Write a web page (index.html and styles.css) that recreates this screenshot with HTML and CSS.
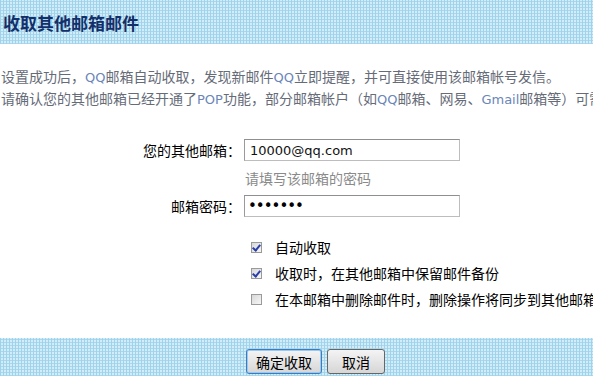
FILE: index.html
```
<!DOCTYPE html>
<html>

<head>
    <meta charset="UTF-8">
    <title>收取其他邮箱邮件</title>
    <link rel="stylesheet" href="styles.css">
</head>

<body>
    <div class="head">
        <h2 class="title">收取其他邮箱邮件</h2>
    </div>

    <div class="main">
        <p class="desc">设置成功后，<span class="en">QQ</span>邮箱自动收取，发现新邮件<span class="en">QQ</span>立即提醒，并可直接使用该邮箱帐号发信。</p>
        <p class="desc">请确认您的其他邮箱已经开通了<span class="en">POP</span>功能，部分邮箱帐户（如<span class="en">QQ</span>邮箱、网易、<span class="en">Gmail</span>邮箱等）可需要手动开启</p>

        <div class="form">
            <label class="lbl" for="mail">您的其他邮箱：</label>
            <input class="ipt" id="mail" type="text" value="10000@qq.com">

            <span></span>
            <span class="hint">请填写该邮箱的密码</span>

            <label class="lbl" for="pwd">邮箱密码：</label>
            <input class="ipt pwd" id="pwd" type="password" value="1234567">
        </div>

        <ul class="opts">
            <li><span class="cb on"></span>自动收取</li>
            <li><span class="cb on"></span>收取时，在其他邮箱中保留邮件备份</li>
            <li><span class="cb"></span>在本邮箱中删除邮件时，删除操作将同步到其他邮箱</li>
        </ul>
    </div>

    <div class="foot">
        <button class="btn ok">确定收取</button>
        <button class="btn cancel">取消</button>
    </div>
</body>

</html>
```

FILE: styles.css
```
* {
    margin: 0;
    padding: 0;
}

body {
    width: 593px;
    height: 376px;
    overflow: hidden;
    background-color: #fff;
    font-family: "Noto Sans CJK SC", "DejaVu Sans", sans-serif;
    font-size: 14px;
    color: #000;
}

.head,
.foot {
    background-color: #d2ecf8;
    background-image:
        repeating-linear-gradient(90deg, #9fd2ec 0 1px, transparent 1px 3px),
        repeating-linear-gradient(0deg, #a9d8ee 0 1px, transparent 1px 3px);
}

.head {
    height: 44px;
    padding-left: 3px;
}

.title {
    font-size: 17px;
    line-height: 46px;
    font-weight: bold;
    color: #14306a;
}

.main {
    height: 294px;
    padding-top: 22px;
    box-sizing: border-box;
}

.desc {
    padding-left: 1px;
    line-height: 21px;
    color: #666b78;
    white-space: nowrap;
    overflow: hidden;
}

.desc .en {
    font-family: "DejaVu Sans", sans-serif;
    font-size: 13px;
    color: #6a86b8;
}

.form {
    display: grid;
    grid-template-columns: 241px 216px;
    column-gap: 3px;
    align-items: center;
    margin-top: 29px;
}

.lbl {
    text-align: right;
    white-space: nowrap;
}

.ipt {
    height: 22px;
    box-sizing: border-box;
    border: 1px solid #bdbdbd;
    border-top-color: #8f8f8f;
    border-left-color: #9a9a9a;
    padding: 0 5px;
    font-family: "DejaVu Sans", sans-serif;
    font-size: 13px;
    color: #111;
    outline: none;
}

.ipt.pwd {
    padding-left: 3px;
    font-size: 15px;
    letter-spacing: -1px;
    color: #000;
}

.hint {
    color: #8a8a8a;
    line-height: 34px;
    padding-left: 1px;
}

.opts {
    list-style: none;
    margin-top: 17px;
    padding-left: 251px;
}

.opts li {
    display: flex;
    align-items: center;
    height: 26px;
    white-space: nowrap;
}

.cb {
    width: 11px;
    height: 11px;
    box-sizing: border-box;
    border: 1px solid #9a9a9a;
    background: linear-gradient(135deg, #d8d8d8, #f6f6f6);
    margin-right: 13px;
    position: relative;
    flex-shrink: 0;
}

.cb.on::after {
    content: "";
    position: absolute;
    left: 2px;
    top: 0px;
    width: 3px;
    height: 6px;
    border: solid #2a3ea8;
    border-width: 0 2px 2px 0;
    transform: rotate(40deg);
}

.foot {
    height: 38px;
    display: flex;
    align-items: flex-start;
    gap: 5px;
    padding-top: 11px;
    padding-left: 246px;
    box-sizing: border-box;
}

.btn {
    height: 25px;
    font-family: "Noto Sans CJK SC", sans-serif;
    font-size: 14px;
    color: #000;
    border: 1px solid #666;
    border-radius: 3px;
    background: linear-gradient(#f4f4f4, #d6d6d6);
}

.btn.ok {
    width: 76px;
    border-color: #3a7cc0;
    box-shadow: inset 0 0 0 1px #9cc8ee;
}

.btn.cancel {
    width: 58px;
}
```
